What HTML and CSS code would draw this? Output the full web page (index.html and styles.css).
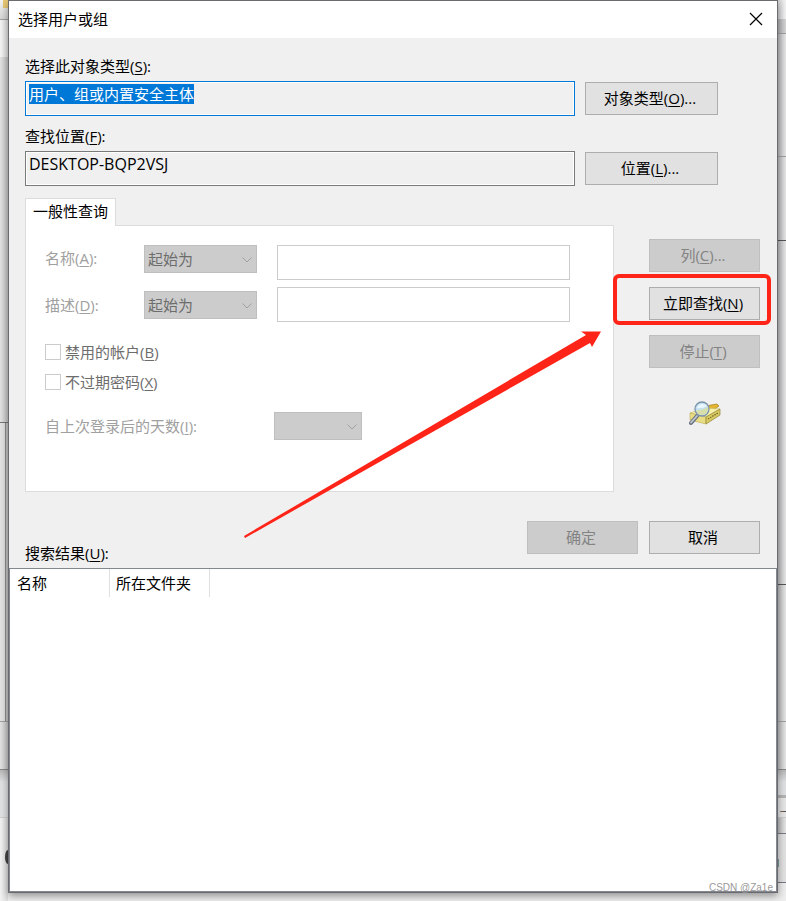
FILE: index.html
```html
<!DOCTYPE html>
<html lang="zh-CN">
<head>
<meta charset="utf-8">
<title>选择用户或组</title>
<link rel="stylesheet" href="styles.css">
</head>
<body>
<div class="desktop">
  <div class="strip strip-left" aria-hidden="true">
    <i class="l-toolbar"></i><i class="l-light"></i><i class="l-window"></i><i class="l-frame"></i><i class="l-plain"></i><i class="l-blue"></i><i class="l-base"><i class="dot"></i></i>
  </div>

  <main class="dialog">
    <header class="titlebar">
      <h1>选择用户或组</h1>
      <button class="close" type="button" aria-label="关闭">
        <svg width="14" height="14" viewBox="0 0 14 14"><path d="M1 1L13 13M13 1L1 13" stroke="#000" stroke-width="1.2" fill="none"/></svg>
      </button>
    </header>

    <form class="content">
      <div class="target">
        <label for="type">选择此对象类型(<u>S</u>):</label>
        <div class="target-row">
          <div class="field focused"><input id="type" class="selected" type="text" readonly value="用户、组或内置安全主体"></div>
          <button class="btn wide" type="button">对象类型(<u>O</u>)...</button>
        </div>
      </div>
      <div class="target">
        <label for="location">查找位置(<u>F</u>):</label>
        <div class="target-row">
          <div class="field"><input id="location" class="latin" type="text" readonly value="DESKTOP-BQP2VSJ"></div>
          <button class="btn wide" type="button">位置(<u>L</u>)...</button>
        </div>
      </div>

      <div class="query">
        <div class="tabs">
          <button class="tab" type="button">一般性查询</button>
          <section class="panel">
            <div class="criteria first">
              <label for="name-mode">名称(<u>A</u>):</label>
              <div class="combo"><select id="name-mode" disabled><option>起始为</option></select><svg width="10" height="6" viewBox="0 0 10 6"><path d="M.5.5L5 5L9.500.5"/></svg></div>
              <input type="text" aria-label="名称" disabled>
            </div>
            <div class="criteria">
              <label for="desc-mode">描述(<u>D</u>):</label>
              <div class="combo"><select id="desc-mode" disabled><option>起始为</option></select><svg width="10" height="6" viewBox="0 0 10 6"><path d="M.5.5L5 5L9.500.5"/></svg></div>
              <input type="text" aria-label="描述" disabled>
            </div>
            <div class="checks">
              <label><input type="checkbox" disabled>禁用的帐户(<u>B</u>)</label>
              <label><input type="checkbox" disabled>不过期密码(<u>X</u>)</label>
            </div>
            <div class="days">
              <label for="days">自上次登录后的天数(<u>I</u>):</label>
              <div class="combo"><select id="days" disabled><option></option></select><svg width="10" height="6" viewBox="0 0 10 6"><path d="M.5.5L5 5L9.500.5"/></svg></div>
            </div>
          </section>
        </div>
        <div class="actions">
          <button class="btn" type="button" disabled>列(<u>C</u>)...</button>
          <div class="marked"><button class="btn" type="button">立即查找(<u>N</u>)</button></div>
          <button class="btn" type="button" disabled>停止(<u>T</u>)</button>
          <svg class="search-icon" width="32" height="26" viewBox="0 0 32 26" aria-hidden="true">
            <path d="M11 6L28 3L30 5L20 12Z" fill="#e2b631" stroke="#a57c1b" stroke-width=".7"/>
            <path d="M1 12L16 7L31 8L17 16Z" fill="#f6f0a8" stroke="#c2b768" stroke-width=".6"/>
            <path d="M1 12L17 16V23L1 19Z" fill="#e9dd83" stroke="#b9aa55" stroke-width=".6"/>
            <path d="M17 16L31 8V14L17 23Z" fill="#d9cb62" stroke="#8f8135" stroke-width=".7"/>
            <path d="M19 18L29 12" stroke="#776b29" stroke-width="1.300" stroke-dasharray="1.500 1"/>
            <path d="M8 15L2 22" stroke="#67717d" stroke-width="4" stroke-linecap="round"/>
            <path d="M8 15L2 21.500" stroke="#c4cad2" stroke-width="1.800" stroke-linecap="round"/>
            <circle cx="13" cy="8" r="7" fill="#c3e0f2" stroke="#7d93aa" stroke-width="1.300"/>
            <path d="M7 9Q12 10 19 6Q20 13 13 14Q8 14 7 9Z" fill="#d8dea9"/>
            <path d="M8 7Q9 3 13 3Q17 3 18 5Q13 8 8 7Z" fill="#eaf7fd"/>
          </svg>
        </div>
      </div>

      <div class="footer">
        <div class="results-label" id="results-label">搜索结果(<u>U</u>):</div>
        <button class="btn" type="button" disabled>确定</button>
        <button class="btn" type="button">取消</button>
      </div>
    </form>

    <div class="results">
      <table aria-labelledby="results-label">
        <thead><tr><th class="col">名称</th><th class="col">所在文件夹</th><th></th></tr></thead>
      </table>
    </div>

    <svg class="arrow" width="360" height="208" viewBox="0 0 360 208" aria-hidden="true"><path d="M1 206L343 5L338 1.500L358 1.500L349 17L347 13L2 208Z" fill="#ff2418"/></svg>
    <div class="watermark">CSDN @Za1e</div>
  </main>

  <div class="strip strip-right" aria-hidden="true">
    <i class="r-top"></i><i class="r-bar"></i><i class="r-a"></i><i class="r-b"></i><i class="r-c"></i><i class="r-d"></i><i class="r-e"></i><i class="r-blue"></i><i class="r-rule"></i><i class="r-f"></i><i class="r-g"></i><i class="r-h"></i><i class="r-base"></i>
  </div>
</div>
</body>
</html>
```
FILE: styles.css
```css
* { box-sizing: border-box; }

body {
  margin: 0;
  background: #f0f0f0;
  color: #000;
  font: 15px/20px "Open Sans", "Noto Sans CJK SC", sans-serif;
}

button, input, select { font: inherit; color: inherit; margin: 0; }
u { text-underline-offset: 2px; text-decoration-thickness: 1px; text-decoration-skip-ink: none; }

.desktop { display: flex; min-height: 100vh; }

/* Slivers of the windows behind the dialog */
.strip { flex: 0 0 8px; display: flex; flex-direction: column; }
.strip i { display: block; flex: none; border-bottom: 1px solid #a0a0a0; }
.strip-left i { background: linear-gradient(90deg, #e3e3e3, #c6c6c6); }
.strip-left .l-toolbar { height: 20px; background: linear-gradient(90deg, transparent 3px, #e9c977 3px) 0 0 / 8px 8px no-repeat, linear-gradient(#f4f4f4, #d5d5d5); }
.strip-left .l-light { height: 37px; border: 0; background: linear-gradient(90deg, #f5f5f5, #e0e0e0); }
.strip-left .l-window { height: 366px; border-color: #777; }
.strip-left .l-frame { height: 299px; background: linear-gradient(90deg, #e2e2e2 5px, #8c8c8c 5px, #8c8c8c 6px, #c6c6c6 6px); }
.strip-left .l-plain { height: 48px; border-color: #888; }
.strip-left .l-blue { height: 48px; background: linear-gradient(#b8b8b8, #e0e2e4 12px); border-color: #d0d0d0; }
.strip-left .l-base { flex: 1; border: 0; padding: 32px 0 0 5px; background: linear-gradient(90deg, #f3f3f3, #dedede); }
.strip-left .dot { width: 3px; height: 14px; border: 0; border-radius: 3px 0 0 3px / 7px 0 0 7px; background: #444; }

.strip-right i { background: linear-gradient(90deg, #bdbdbd, #e6e6e6); }
.strip-right .r-top { height: 19px; border: 0; background: linear-gradient(90deg, #d4d4d4, #f3f3f3); }
.strip-right .r-bar { height: 15px; background: linear-gradient(90deg, #b0b0b0, #d5d5d5); }
.strip-right .r-a { height: 123px; }
.strip-right .r-b { height: 84px; border-color: #555; }
.strip-right .r-c { height: 344px; border-color: #555; }
.strip-right .r-d { height: 137px; }
.strip-right .r-e { height: 48px; border-color: #888; }
.strip-right .r-blue { height: 25px; border: 0; background: linear-gradient(#b8b8b8, #dfe1e3 12px); }
.strip-right .r-rule { height: 3px; border: 0; background: #b5b5b5; }
.strip-right .r-f { height: 20px; border-color: #ccc; background: linear-gradient(90deg, transparent 2px, #719bb5 2px, #719bb5 3px, #855b42 3px, #855b42 5px, #555 5px) 0 13px / 8px 1px no-repeat, #e6e6e6; }
.strip-right .r-g { height: 16px; border-color: #777985; }
.strip-right .r-h { height: 49px; border-color: #777985; background: linear-gradient(#7aa0a5, #7aa0a5) 0 25px / 1px 8px no-repeat, #e2e2e2; }
.strip-right .r-base { flex: 1; border: 0; background: #eee; }

.dialog {
  position: relative;
  flex: 1;
  min-width: 0;
  display: flex;
  flex-direction: column;
  margin-bottom: 8px;
  border: 1px solid #6b6b6f;
  background: #f0f0f0;
  box-shadow: 0 3px 8px #0006;
}

.titlebar { display: flex; align-items: center; justify-content: space-between; height: 37px; padding: 0 8px 2px 9px; background: #fff; }
.titlebar h1 { margin: 0; font-size: 15px; font-weight: 400; }
.close { display: flex; padding: 6px; border: 0; background: none; }

.content { padding: 18px 17px 14px 16px; }
.target { padding-right: 42px; margin-bottom: 10px; }
.target > label { display: block; margin-bottom: 5px; }
.target-row { display: flex; align-items: center; gap: 10px; }
.field { flex: 1; height: 35px; padding: 2px 3px; border: 1px solid #7a7a7a; box-shadow: inset 0 0 0 1px #fff; }
.field input { display: block; width: 100%; height: 20px; padding: 0; border: 0; outline: 0; background: none; }
.field input.latin { font-size: 16px; }
.field.focused { border-color: #0078d7; }
.field input.selected { width: auto; field-sizing: content; background: #0078d7; color: #fff; }

.btn { width: 111px; height: 33px; padding: 0 3px 2px 0; border: 1px solid #adadad; background: #e1e1e1; }
.btn.wide { width: 133px; }
.btn:disabled { border-color: #bfbfbf; background: #ccc; color: #838383; }

.query { display: flex; gap: 35px; margin-top: 12px; }
.tabs { flex: 1; min-width: 0; }
.tab { position: relative; display: block; height: 28px; padding: 0 7px 3px; border: 1px solid #dcdcdc; border-bottom: 0; background: #fff; }
.panel { margin-top: -1px; padding: 19px 43px 51px 19px; border: 1px solid #dcdcdc; background: #fff; color: #a0a0a0; }

.criteria { display: grid; grid-template-columns: 99px 113px 1fr; align-items: center; margin-bottom: 7px; }
.criteria.first { align-items: start; }
.criteria label { line-height: 26px; }
.criteria > input { width: auto; min-width: 0; height: 35px; margin-left: 20px; border: 1px solid #ccc; background: #fff; }
.combo { position: relative; height: 28px; }
.combo select { display: block; appearance: none; width: 100%; height: 28px; padding: 0 3px; border: 1px solid #bfbfbf; border-radius: 0; background: #ccc; color: #6d6d6d; opacity: 1; }
.combo svg { position: absolute; right: 5px; top: 12px; fill: none; stroke: #a0a0a0; }

.checks { display: grid; gap: 10px; margin: 20px 0; color: #6d6d6d; }
.checks label { display: flex; align-items: center; }
.checks input { appearance: none; width: 16px; height: 16px; margin-right: 4px; border: 1px solid #ccc; background: #fff; }
.days { display: grid; grid-template-columns: 229px 88px; align-items: center; }

.actions { display: flex; flex-direction: column; gap: 15px; padding-top: 41px; }
.marked { position: relative; height: 33px; }
.marked::after { content: ""; position: absolute; inset: -13px -11px -5px -36px; border: 4px solid #ff2418; border-radius: 6px; pointer-events: none; }
.search-icon { align-self: center; margin-top: 18px; }

.footer { display: flex; gap: 11px; margin-top: 29px; }
.results-label { flex: 1; align-self: flex-end; margin-bottom: -9px; }

.results { flex: 1; border: 1px solid #828790; background: #fff; }
.results table { width: 100%; border-collapse: separate; border-spacing: 0; table-layout: fixed; }
.results th { height: 28px; padding: 0 6px 0 7px; font-weight: 400; text-align: left; }
.results .col { width: 100px; border-right: 1px solid #e0e0e0; }
.results .col + .col { padding-left: 6px; }

.arrow { position: absolute; left: 234px; top: 329px; pointer-events: none; }
.watermark { position: absolute; right: 4px; bottom: -2px; color: #999; font: 10px/12px "Liberation Sans", sans-serif; }
```
